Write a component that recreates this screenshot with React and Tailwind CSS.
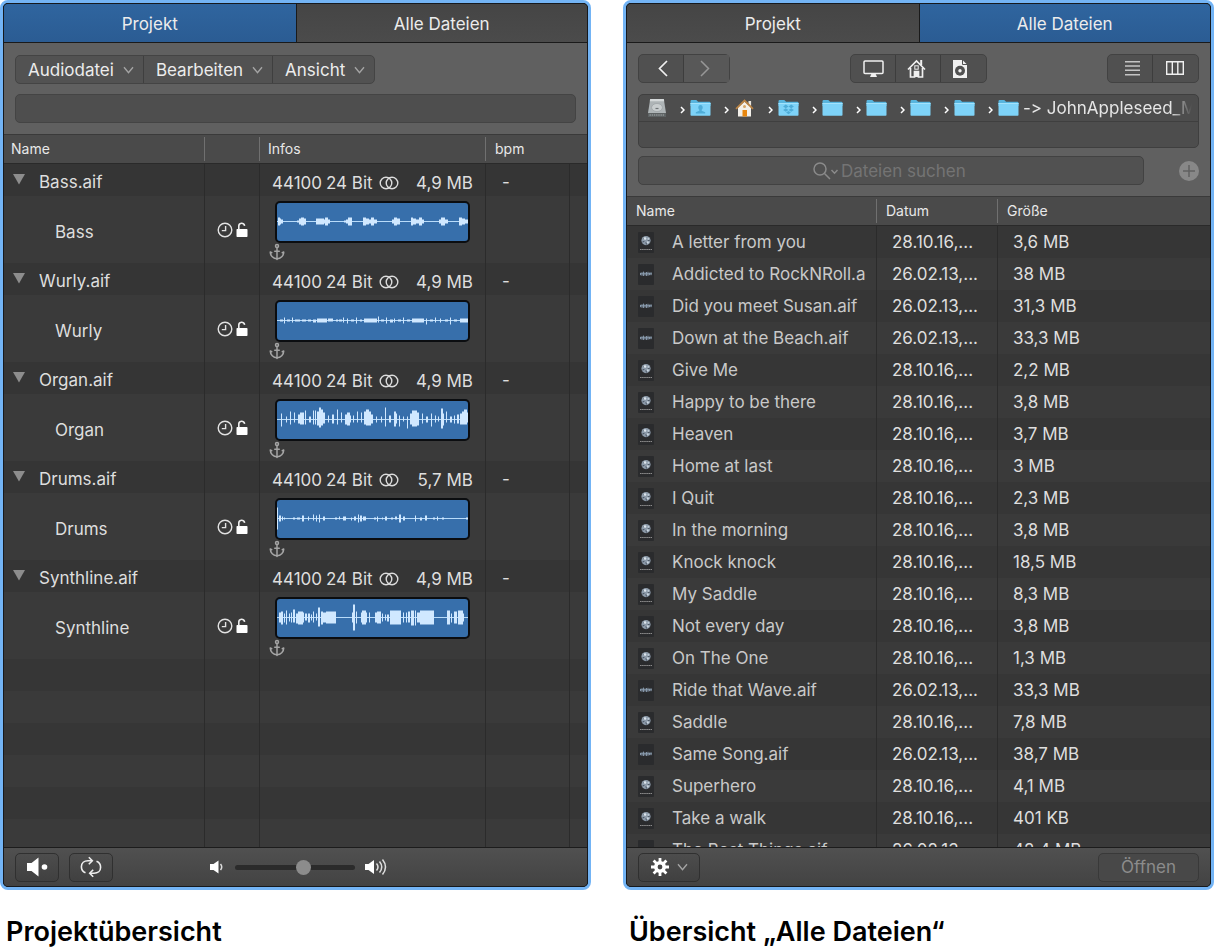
import React from "react";
import { Anchor } from "lucide-react";

const PROJECT = "PROJECT";
const AUDIO = "AUDIO";

// Each bar is [x, width, height above the axis, height below the axis]
const bassBars = [
  [1, 2, 4, 4], [3, 1, 3, 3], [4, 2, 2, 2],
  [20, 2, 1, 1], [22, 2, 3, 3], [24, 3, 4, 4], [27, 2, 3, 3],
  [39, 8, 3, 3], [47, 1, 2, 2], [48, 3, 4, 4], [51, 2, 2, 2],
  [67, 2, 1, 1], [69, 2, 2, 2], [71, 2, 4, 4], [73, 2, 4, 4],
  [86, 3, 4, 4], [89, 3, 3, 3], [92, 2, 2, 2], [94, 3, 4, 4], [97, 3, 2, 2],
  [115, 2, 2, 2], [117, 3, 4, 4], [120, 3, 3, 3],
  [134, 2, 4, 4], [136, 3, 3, 3], [139, 3, 2, 2], [142, 3, 4, 4], [145, 2, 2, 2],
  [162, 2, 2, 2], [164, 4, 4, 4], [168, 3, 2, 2],
  [182, 3, 4, 4], [185, 3, 3, 3], [188, 3, 2, 2],
];

const wurlyBars = [
  [3, 3, 1, 1], [7, 1, 3, 3], [10, 3, 1, 1], [15, 1, 3, 2], [18, 5, 1, 1], [25, 4, 1, 1],
  [31, 3, 1, 1], [36, 3, 1, 2], [40, 10, 2, 2], [51, 5, 2, 1], [59, 2, 1, 1], [62, 3, 1, 1],
  [66, 1, 3, 2], [70, 1, 2, 3], [74, 3, 1, 1], [79, 1, 3, 3], [83, 2, 1, 1], [87, 13, 2, 2],
  [101, 1, 4, 2], [104, 3, 1, 1], [109, 1, 3, 3], [113, 3, 1, 2], [117, 1, 2, 2],
  [121, 3, 1, 1], [126, 1, 3, 3], [130, 3, 1, 1], [135, 12, 2, 2], [149, 1, 2, 4],
  [153, 3, 1, 1], [158, 1, 3, 2], [163, 1, 2, 2], [168, 3, 1, 1], [173, 1, 3, 4],
  [177, 3, 1, 1], [183, 8, 2, 2],
];

const organBars = [
  [4, 1, 6, 7], [9, 1, 3, 3], [13, 1, 8, 5], [17, 1, 7, 3], [21, 2, 5, 4], [23, 4, 7, 5],
  [28, 1, 9, 5], [32, 2, 3, 3], [36, 1, 9, 5], [38, 1, 9, 5], [40, 2, 8, 6], [42, 2, 12, 8],
  [44, 2, 10, 6], [46, 2, 7, 4], [51, 1, 4, 3], [55, 2, 5, 4], [60, 1, 10, 5], [64, 1, 7, 3],
  [68, 2, 5, 5], [70, 3, 7, 6], [73, 1, 4, 3], [76, 1, 4, 3], [80, 1, 8, 3], [84, 1, 7, 3],
  [87, 2, 8, 5], [89, 3, 10, 6], [92, 2, 8, 6], [94, 2, 5, 4], [99, 1, 3, 3], [104, 1, 3, 3],
  [108, 1, 12, 7], [112, 2, 4, 3], [117, 2, 8, 7], [119, 1, 6, 4], [122, 1, 4, 7],
  [126, 1, 3, 2], [130, 1, 3, 9], [133, 2, 6, 5], [135, 5, 9, 7], [140, 2, 7, 6],
  [145, 1, 6, 4], [149, 2, 3, 3], [154, 1, 6, 7], [158, 1, 4, 3], [161, 1, 3, 2],
  [164, 2, 11, 9], [166, 1, 6, 6], [169, 1, 8, 3], [173, 2, 3, 3], [177, 1, 4, 4],
  [180, 2, 5, 4], [183, 2, 6, 5], [185, 2, 8, 5], [187, 3, 10, 5], [190, 1, 7, 3],
];

const drumsBars = [
  [0, 1, 11, 11], [2, 2, 3, 3], [5, 1, 2, 2], [7, 1, 1, 1], [16, 2, 1, 1], [20, 3, 1, 1],
  [25, 2, 3, 3], [31, 1, 2, 2], [36, 1, 4, 2], [39, 1, 3, 3], [42, 1, 4, 4], [46, 2, 2, 2],
  [58, 2, 1, 1], [62, 1, 2, 1], [66, 3, 2, 2], [74, 1, 1, 2], [77, 2, 2, 2], [81, 1, 4, 4],
  [83, 2, 3, 3], [86, 3, 2, 2], [97, 2, 1, 1], [100, 1, 2, 3], [105, 1, 1, 1], [108, 2, 2, 2],
  [114, 2, 1, 1], [118, 2, 2, 1], [122, 2, 4, 4], [126, 2, 2, 2], [138, 1, 3, 3],
  [143, 2, 1, 2], [148, 2, 3, 2], [156, 2, 1, 1], [160, 1, 2, 2], [165, 2, 1, 1], [189, 2, 1, 1],
];

const synthBars = [
  [2, 2, 5, 5], [4, 2, 6, 7], [7, 1, 4, 5], [9, 1, 7, 7], [12, 1, 4, 4], [14, 1, 5, 5],
  [16, 2, 8, 5], [19, 2, 4, 6], [21, 5, 6, 7], [26, 1, 5, 5], [28, 2, 4, 3], [31, 2, 4, 5],
  [34, 1, 3, 3], [36, 1, 6, 5], [39, 1, 4, 3], [41, 2, 10, 9], [44, 2, 6, 7], [46, 3, 5, 5],
  [49, 10, 6, 6],
  [75, 1, 5, 5], [76, 2, 13, 13], [79, 1, 6, 6], [84, 1, 5, 5], [85, 4, 7, 7], [89, 1, 5, 5],
  [92, 1, 5, 5],
  [98, 2, 5, 5], [100, 4, 6, 6], [105, 1, 4, 4], [108, 1, 3, 3], [110, 2, 3, 4],
  [113, 11, 7, 7], [126, 1, 5, 5], [129, 1, 5, 5], [131, 2, 6, 5], [134, 3, 7, 8],
  [138, 1, 7, 8], [140, 3, 5, 5], [143, 14, 7, 7],
  [170, 3, 7, 7], [174, 1, 4, 5], [177, 3, 6, 6], [181, 5, 7, 7], [186, 1, 4, 4],
];

const tracks = [
  { name: "Bass", size: "4,9 MB", bars: bassBars },
  { name: "Wurly", size: "4,9 MB", bars: wurlyBars },
  { name: "Organ", size: "4,9 MB", bars: organBars },
  { name: "Drums", size: "5,7 MB", bars: drumsBars },
  { name: "Synthline", size: "4,9 MB", bars: synthBars },
];

const files = [
  { name: "A letter from you", date: "28.10.16,...", size: "3,6 MB", kind: PROJECT },
  { name: "Addicted to RockNRoll.a", date: "26.02.13,...", size: "38 MB", kind: AUDIO },
  { name: "Did you meet Susan.aif", date: "26.02.13,...", size: "31,3 MB", kind: AUDIO },
  { name: "Down at the Beach.aif", date: "26.02.13,...", size: "33,3 MB", kind: AUDIO },
  { name: "Give Me", date: "28.10.16,...", size: "2,2 MB", kind: PROJECT },
  { name: "Happy to be there", date: "28.10.16,...", size: "3,8 MB", kind: PROJECT },
  { name: "Heaven", date: "28.10.16,...", size: "3,7 MB", kind: PROJECT },
  { name: "Home at last", date: "28.10.16,...", size: "3 MB", kind: PROJECT },
  { name: "I Quit", date: "28.10.16,...", size: "2,3 MB", kind: PROJECT },
  { name: "In the morning", date: "28.10.16,...", size: "3,8 MB", kind: PROJECT },
  { name: "Knock knock", date: "28.10.16,...", size: "18,5 MB", kind: PROJECT },
  { name: "My Saddle", date: "28.10.16,...", size: "8,3 MB", kind: PROJECT },
  { name: "Not every day", date: "28.10.16,...", size: "3,8 MB", kind: PROJECT },
  { name: "On The One", date: "28.10.16,...", size: "1,3 MB", kind: PROJECT },
  { name: "Ride that Wave.aif", date: "26.02.13,...", size: "33,3 MB", kind: AUDIO },
  { name: "Saddle", date: "28.10.16,...", size: "7,8 MB", kind: PROJECT },
  { name: "Same Song.aif", date: "26.02.13,...", size: "38,7 MB", kind: AUDIO },
  { name: "Superhero", date: "28.10.16,...", size: "4,1 MB", kind: PROJECT },
  { name: "Take a walk", date: "28.10.16,...", size: "401 KB", kind: PROJECT },
  { name: "The Best Things.aif", date: "26.02.13,...", size: "42,4 MB", kind: AUDIO },
];

const ChevronDown = () => (
  <svg className="w-[11px] h-2 text-[#a4a4a4]" viewBox="0 0 11 8" fill="none" stroke="currentColor" strokeWidth="1.4">
    <path d="M1 1.2 5.5 6.6 10 1.2" />
  </svg>
);

const Waveform = ({ bars }) => (
  <svg className="block w-[195px] h-[42px]" viewBox="0 0 195 42">
    <rect x="1" y="1" width="193" height="40" rx="4" fill="#376fab" stroke="#0b0d10" strokeWidth="2" />
    <rect x="2" y="20" width="191" height="1" fill="#b9dcfa" />
    {bars.map(([x, width, up, down]) => (
      <rect key={x} x={x + 2} y={20.5 - up} width={width} height={up + down} fill="#d0e8ff" />
    ))}
  </svg>
);

const ClockIcon = () => (
  <svg className="w-4 h-4" viewBox="0 0 16 16" fill="none" stroke="#e2e2e2" strokeWidth="1.4">
    <circle cx="8" cy="8" r="6.8" />
    <path d="M8.6 4v4.6H4.8" />
  </svg>
);

const UnlockIcon = () => (
  <svg className="w-3 h-4" viewBox="0 0 12 16">
    <rect x="0.5" y="7" width="11" height="8" rx="0.8" fill="#fff" />
    <path d="M2.8 7.5V4.4a2.9 2.9 0 0 1 5.8-.6" fill="none" stroke="#eee" strokeWidth="1.6" />
  </svg>
);

const StereoIcon = () => (
  <svg className="w-5 h-[14px]" viewBox="0 0 20 14" fill="none" stroke="#dcdcdc" strokeWidth="1.4">
    <circle cx="7" cy="7" r="5.8" />
    <circle cx="13" cy="7" r="5.8" />
  </svg>
);

const FileIcon = ({ kind }) => (
  <svg className="block w-4 h-[21px]" viewBox="0 0 16 21">
    <rect width="16" height="21" rx="1" fill="#2a2b2d" />
    {kind === PROJECT ? (
      <>
        <circle cx="8" cy="8.600" r="4.600" fill="#8e9cab" />
        <path d="M5.200 6.400l2 1.200M11.800 8.200l-2.200.8M8.400 12.600l-.4-2.400M4.400 10l2-.6" stroke="#3c4652" strokeWidth="0.9" />
        <circle cx="7" cy="6.600" r="1.300" fill="#dbe4ec" />
        <circle cx="9.800" cy="10.400" r="1.100" fill="#cdd8e2" />
        <circle cx="10.400" cy="6.800" r="0.900" fill="#c2ced9" />
        <path d="M2 17.500h12" stroke="#8c8c8c" strokeDasharray="1.6 0.5" />
      </>
    ) : (
      <path
        d="M2.500 8.800v2.400M4 8.200v3.600M5.500 7.600v4.400M7 8.400v3.200M8.500 8v4M10 7.800v4M11.500 8.600v2.600M13 8.200v3M2 9.800h12"
        stroke="#8da0b4"
        strokeWidth="0.9"
      />
    )}
  </svg>
);

const DriveIcon = () => (
  <svg className="w-5 h-5 shrink-0" viewBox="0 0 20 20">
    <path d="M3.2 1h13.6L19 15H1z" fill="#aeb4b6" />
    <path d="M3.2 1h13.6l.4 2.2H2.8z" fill="#d5d9da" />
    <path d="M1 15h18v4H1z" fill="#5d6263" />
    <ellipse cx="10" cy="9.5" rx="5.4" ry="4" fill="#c8cdce" stroke="#959b9d" strokeWidth="0.6" />
    <path d="M8.5 10.500h3" stroke="#6f7577" strokeWidth="1.2" />
    <path d="M2.5 17h15" stroke="#a9aeb0" strokeWidth="1" strokeDasharray="1.4 0.8" />
  </svg>
);

const FolderIcon = ({ badge }) => (
  <svg className="w-[21px] h-5 shrink-0" viewBox="0 0 21 20">
    <path d="M.5 3.2Q.5 2 1.7 2h4.6l1.8 1.8h11.2q1.2 0 1.2 1.2v3H.5z" fill="#58b5de" />
    <path d="M.5 5h20v12q0 .8-.8.8H1.3q-.8 0-.8-.8z" fill="#7ed3f8" />
    <path d="M.5 5h20v1H.5z" fill="#a3e2fc" />
    {badge === "user" && (
      <path
        d="M10.500 7c1.500 0 2.200 1 2.200 2.400 0 1.200-.6 1.800-1 2.300v1l3.500 1.500v1.300H5.800v-1.300l3.500-1.500v-1c-.4-.5-1-1.100-1-2.300C8.300 8 9 7 10.500 7z"
        fill="#4fadd8"
      />
    )}
    {badge === "dropbox" && (
      <path
        d="M7.8 6.6l2.7 1.8-2.7 1.8-2.7-1.8zM13.2 6.6l2.7 1.8-2.7 1.8-2.7-1.8zM7.8 10.2l2.7 1.8-2.7 1.8L5.1 12zM13.2 10.2l2.7 1.8-2.7 1.8-2.7-1.8zM10.5 13l2.4 1.6-2.4 1.6-2.4-1.6z"
        fill="#4fadd8"
      />
    )}
  </svg>
);

const HouseIcon = () => (
  <svg className="w-[21px] h-5 shrink-0" viewBox="0 0 21 20">
    <path d="M14.5 3h2.6v6h-2.6z" fill="#e9e4dc" />
    <path d="M4 9.5 10.5 3.5 17 9.5V18.5H4z" fill="#f3f0ea" />
    <path d="M2 10.8 10.5 2.6 19 10.8" fill="none" stroke="#b88244" strokeWidth="1.8" />
    <rect x="8.5" y="12" width="4.5" height="6.5" fill="#e8870f" />
    <circle cx="10.5" cy="8.5" r="1.5" fill="#d7a566" />
  </svg>
);

const crumbs = [
  { label: "Benutzer", icon: <FolderIcon badge="user" /> },
  { label: "Privat", icon: <HouseIcon /> },
  { label: "Dropbox", icon: <FolderIcon badge="dropbox" /> },
  { label: "Ordner 1", icon: <FolderIcon /> },
  { label: "Ordner 2", icon: <FolderIcon /> },
  { label: "Ordner 3", icon: <FolderIcon /> },
  { label: "Ordner 4", icon: <FolderIcon /> },
  { label: "Ordner 5", icon: <FolderIcon /> },
];

const Panel = ({ activeTab, caption, children }) => (
  <figure className="flex flex-col">
    <div className="flex-1 flex flex-col rounded-lg border-3 border-[#73b4f5] bg-black">
      <div className="flex-1 flex flex-col rounded-[5px] border border-[#16191d] overflow-hidden bg-[#3a3a3a] text-[17px] leading-6 text-[#dedede]">
        <div role="tablist" className="grid grid-cols-2 border-b border-[#1a1a1a] text-[#ececec]">
          {["Projekt", "Alle Dateien"].map((tab) => (
            <button
              key={tab}
              role="tab"
              aria-selected={tab === activeTab}
              className={`h-[38px] pt-[2px] border-[#1a1a1a] last:border-l ${
                tab === activeTab
                  ? "bg-linear-to-b from-[#2f659f] to-[#2b5c93]"
                  : "bg-linear-to-b from-[#454545] to-[#4b4b4b]"
              }`}
            >
              {tab}
            </button>
          ))}
        </div>
        {children}
      </div>
    </div>
    <figcaption className="mt-[27px] mb-[6px] pl-[6px] text-[27px] leading-[30px] font-semibold text-black">
      {caption}
    </figcaption>
  </figure>
);

const HeaderCell = ({ children, last, indent = "pl-[9px]" }) => (
  <th scope="col" className="h-[30px] p-0 border-y border-t-[#3a3a3a] border-b-[#2a2a2a] bg-[#4a4a4a] text-left text-sm font-normal text-[#e8e8e8]">
    <div className={`h-6 leading-6 ${indent} ${last ? "" : "border-r border-[#707070]"}`}>{children}</div>
  </th>
);

const ProjectPanel = () => (
  <Panel activeTab="Projekt" caption="Projektübersicht">
    <div className="bg-[#606060] px-[11px] pt-3 pb-[11px] flex flex-col gap-[10px]">
      <div className="flex self-start h-[29px] rounded-[5px] border border-[#444] bg-[#525252] divide-x divide-[#3f3f3f]">
        {["Audiodatei", "Bearbeiten", "Ansicht"].map((menu) => (
          <button key={menu} className="flex items-center gap-[9px] pl-3 pr-[9px] text-[#ececec]">
            {menu}
            <ChevronDown />
          </button>
        ))}
      </div>
      <input
        type="text"
        aria-label="Info"
        readOnly
        className="h-[29px] w-full rounded-[5px] border border-[#444] bg-[#4e4e4e] px-2"
      />
    </div>
    <table className="w-full table-fixed border-separate border-spacing-0">
      <colgroup>
        <col />
        <col className="w-[55px]" />
        <col className="w-[226px]" />
        <col className="w-[84px]" />
        <col className="w-[17px]" />
      </colgroup>
      <thead>
        <tr>
          <HeaderCell indent="pl-[7px]">Name</HeaderCell>
          <HeaderCell />
          <HeaderCell indent="pl-2">Infos</HeaderCell>
          <HeaderCell last>bpm</HeaderCell>
          <HeaderCell last />
        </tr>
      </thead>
      <tbody className="[&_td]:p-0 [&_td]:border-r [&_td]:border-[#2b2b2b] [&_td:last-child]:border-r-0">
        {tracks.map((track) => (
          <React.Fragment key={track.name}>
            <tr className="h-8 bg-[#353535]">
              <td>
                <div className="flex items-center gap-[14px] pl-[9px] pt-1">
                  <button aria-label={`${track.name}.aif zuklappen`} className="pb-[6px]">
                    <svg className="w-3 h-[11px]" viewBox="0 0 12 11" fill="#8d8d8d">
                      <path d="M0 0h12L6 10.5z" />
                    </svg>
                  </button>
                  {track.name}.aif
                </div>
              </td>
              <td />
              <td>
                <div className="flex items-center pl-3 pr-3 pt-[6px]">
                  <span className="w-[54px]">44100</span>
                  <span className="w-[53px]">24 Bit</span>
                  <StereoIcon />
                  <span className="ml-auto">{track.size}</span>
                </div>
              </td>
              <td>
                <div className="pl-4 pt-1">-</div>
              </td>
              <td />
            </tr>
            <tr className="h-[67px] bg-[#3a3a3a]">
              <td>
                <div className="pl-[51px] pt-1">{track.name}</div>
              </td>
              <td>
                <div className="flex items-center justify-center gap-[3px]">
                  <ClockIcon />
                  <UnlockIcon />
                </div>
              </td>
              <td className="align-top">
                <div className="pl-[15px] pt-[5px]">
                  <Waveform bars={track.bars} />
                </div>
                <Anchor className="ml-2 w-[18px] h-[18px] text-[#a5a5a5]" strokeWidth={2} />
              </td>
              <td />
              <td />
            </tr>
          </React.Fragment>
        ))}
        {[0, 1, 2, 3, 4, 5].map((row) => (
          <tr key={row} className="h-8 last:h-7 odd:bg-[#363636] even:bg-[#3a3a3a]">
            <td />
            <td />
            <td />
            <td />
            <td />
          </tr>
        ))}
      </tbody>
    </table>
    <div className="mt-auto h-[39px] grid grid-cols-[1fr_auto_1fr] items-center px-[11px] border-t border-[#1c1c1c] bg-linear-to-b from-[#505050] to-[#434343]">
      <div className="flex gap-[10px]">
        <button
          aria-label="Vorhören"
          className="w-11 h-[29px] flex items-center justify-center rounded-[5px] border border-[#303030] bg-linear-to-b from-[#4d4d4d] to-[#404040]"
        >
          <svg className="w-[22px] h-5" viewBox="0 0 22 20" fill="#fff">
            <path d="M1 6h4.500L12.500 0.500v19L5.500 14H1z" />
            <circle cx="18.500" cy="10" r="2.800" />
          </svg>
        </button>
        <button
          aria-label="Schleife"
          className="w-11 h-[29px] flex items-center justify-center rounded-[5px] border border-[#303030] bg-linear-to-b from-[#4d4d4d] to-[#404040]"
        >
          <svg className="w-[22px] h-[22px]" viewBox="0 0 22 22" fill="none" stroke="#eee" strokeWidth="1.6">
            <path d="M5.500 16.800C3 15.800 1.400 13.500 1.400 10.800 1.400 7 4.200 4.800 8 4.800H12" />
            <path d="M8.800 1.300 12.300 4.800 8.800 8.300" />
            <path d="M16.500 5.200C19 6.200 20.600 8.500 20.600 11.200 20.600 15 17.800 17.200 14 17.200H10" />
            <path d="M13.200 20.700 9.700 17.200 13.200 13.700" />
          </svg>
        </button>
      </div>
      <div className="flex items-center gap-[10px] pl-[6px]">
        <svg className="w-[15px] h-[14px]" viewBox="0 0 15 14" fill="#fff">
          <path d="M0 4h3.500L8.500 0.500v13L3.500 10H0z" />
          <path d="M10.500 4q2.500 3 0 6" fill="none" stroke="#ddd" strokeWidth="1.500" />
        </svg>
        <input
          type="range"
          aria-label="Lautstärke"
          min="0"
          max="100"
          defaultValue="58"
          className="w-[120px] h-4 appearance-none bg-transparent [&::-webkit-slider-runnable-track]:h-[5px] [&::-webkit-slider-runnable-track]:rounded-full [&::-webkit-slider-runnable-track]:bg-[#2b2b2b] [&::-webkit-slider-thumb]:appearance-none [&::-webkit-slider-thumb]:-mt-[5px] [&::-webkit-slider-thumb]:h-[15px] [&::-webkit-slider-thumb]:w-[15px] [&::-webkit-slider-thumb]:rounded-full [&::-webkit-slider-thumb]:bg-[#8c8c8c]"
        />
        <svg className="w-[22px] h-[18px]" viewBox="0 0 22 18" fill="#fff">
          <path d="M0 6h3.500L9 2v14L3.500 12H0z" />
          <path d="M11.500 5.500q3 3.500 0 7M14.500 3.500q4.500 5.500 0 11M17.500 1.500q6 7.500 0 15" fill="none" stroke="#ddd" strokeWidth="1.500" />
        </svg>
      </div>
    </div>
  </Panel>
);

const toolGroup = "flex h-[29px] rounded-[5px] border border-[#424242] bg-[#505050] divide-x divide-[#3d3d3d]";
const toolButton = "w-[45px] flex items-center justify-center text-[#f0f0f0]";

const FilesPanel = () => (
  <Panel activeTab="Alle Dateien" caption="Übersicht „Alle Dateien“">
    <div className="bg-[#606060] px-[11px] pt-[11px] pb-[11px]">
      <div className="flex justify-between">
        <div className={toolGroup}>
          <button aria-label="Zurück" className={toolButton}>
            <svg className="ml-[3px] w-[10px] h-[17px]" viewBox="0 0 10 17" fill="none" stroke="currentColor" strokeWidth="1.700">
              <path d="M9 1 1.500 8.500 9 16" />
            </svg>
          </button>
          <button aria-label="Vorwärts" disabled className="w-[45px] pr-1 flex items-center justify-center bg-[#585858] text-[#979797]">
            <svg className="w-[10px] h-[17px]" viewBox="0 0 10 17" fill="none" stroke="currentColor" strokeWidth="1.500">
              <path d="M1 1l7.500 7.500L1 16" />
            </svg>
          </button>
        </div>
        <div className={toolGroup}>
          <button aria-label="Computer" className={toolButton}>
            <svg className="mt-px w-[21px] h-[18px]" viewBox="0 0 21 18" fill="none" stroke="currentColor" strokeWidth="1.500">
              <rect x="1" y="1" width="19" height="12.500" rx="1" />
              <path d="M8.500 13.500h4l1.500 3.500H7z" fill="currentColor" stroke="none" />
            </svg>
          </button>
          <button aria-label="Privatordner" className={toolButton}>
            <svg className="mr-1 w-[19px] h-[19px]" viewBox="0 0 19 19" fill="none" stroke="currentColor">
              <path d="M1 10.500 9.500 2 18 10.500" strokeWidth="1.700" />
              <path d="M3.500 9v9h4v-5.500h4V18h4V9" strokeWidth="1.700" />
              <path d="M14.200 1v5" strokeWidth="2" />
              <rect x="7.800" y="6.800" width="3.400" height="3.400" strokeWidth="1" />
              <path d="M9.500 12.500V18" strokeWidth="3.500" />
            </svg>
          </button>
          <button aria-label="Projektordner" className={toolButton}>
            <svg className="mr-2 w-[14px] h-[18px]" viewBox="0 0 14 18">
              <path d="M0 0h9.500L14 4.500V18H0z" fill="currentColor" />
              <path d="M9.500 0v4.500H14" fill="none" stroke="#505050" strokeWidth="1" />
              <circle cx="7" cy="10.800" r="5" fill="#505050" />
              <circle cx="7" cy="10.800" r="1.700" fill="currentColor" />
            </svg>
          </button>
        </div>
        <div className={toolGroup}>
          <button aria-label="Listendarstellung" className={toolButton}>
            <svg className="ml-1 w-[15px] h-[15px]" viewBox="0 0 15 15" fill="#c4c4c4">
              <path d="M0 0h15v1.500H0zM0 4.300h15v1.500H0zM0 8.600h15v1.500H0zM0 12.900h15v1.500H0z" />
            </svg>
          </button>
          <button aria-label="Spaltendarstellung" className={toolButton}>
            <svg className="mr-[2px] mb-px w-[18px] h-[14px]" viewBox="0 0 18 14" fill="none" stroke="currentColor" strokeWidth="1.400">
              <path d="M.7.7h16.600v12.600H.7zM6.300 1v12M11.800 1v12" />
            </svg>
          </button>
        </div>
      </div>
      <div className="mt-[11px] rounded-[5px] border border-[#3f3f3f] bg-[#4d4d4d]">
        <div className="h-[27px] border-b border-[#3f3f3f]">
          <nav
            aria-label="Pfad"
            className="flex items-center h-[26px] pl-2 mr-[6px] overflow-hidden whitespace-nowrap [mask-image:linear-gradient(to_right,black_96%,transparent)]"
          >
            <a href="#drive" aria-label="Macintosh HD">
              <DriveIcon />
            </a>
            {crumbs.map((crumb) => (
              <React.Fragment key={crumb.label}>
                <svg className="ml-[13px] mr-[5px] mt-1 w-[5px] h-2 shrink-0" viewBox="0 0 5 8" fill="none" stroke="#fff" strokeWidth="1.500">
                  <path d="M1 1l3 3-3 3" />
                </svg>
                <a href={`#${crumb.label}`} aria-label={crumb.label}>
                  {crumb.icon}
                </a>
              </React.Fragment>
            ))}
            <span className="pl-1 text-[#e6e6e6] [font-feature-settings:'calt'_0]">-&gt; JohnAppleseed_M</span>
          </nav>
        </div>
        <div className="h-[25px]" />
      </div>
      <div className="mt-2 flex items-center justify-between">
        <label className="w-[506px] h-[29px] flex items-center justify-center rounded-[5px] border border-[#424242] bg-[#515151] text-[#777]">
          <svg className="w-[26px] h-[18px]" viewBox="0 0 26 18" fill="none" stroke="#8a8a8a" strokeWidth="1.500">
            <circle cx="7" cy="7" r="6" />
            <path d="M11.500 11.500l5.500 5.500M18.500 8l3 3.200L24.500 8" />
          </svg>
          <input
            type="text"
            aria-label="Dateien suchen"
            placeholder="Dateien suchen"
            className="w-[130px] pl-[2px] bg-transparent outline-none placeholder:text-[#747474]"
          />
        </label>
        <button aria-label="Suchkriterium hinzufügen">
          <svg className="block w-5 h-5" viewBox="0 0 20 20">
            <circle cx="10" cy="10" r="10" fill="#888" />
            <path d="M10 4v12M4 10h12" stroke="#606060" strokeWidth="1.500" />
          </svg>
        </button>
      </div>
    </div>
    <div className="h-[651px] overflow-y-auto [scrollbar-width:none]">
      <table className="w-full table-fixed border-separate border-spacing-0">
        <colgroup>
          <col />
          <col className="w-[121px]" />
          <col className="w-[212px]" />
        </colgroup>
        <thead className="sticky top-0">
          <tr>
            <HeaderCell>Name</HeaderCell>
            <HeaderCell>Datum</HeaderCell>
            <HeaderCell last>Größe</HeaderCell>
          </tr>
        </thead>
        <tbody>
          {files.map((file) => (
            <tr key={file.name} className="h-8 odd:bg-[#363636] even:bg-[#3a3a3a]">
              <td className="p-0 border-r border-[#2b2b2b]">
                <div className="flex items-center pl-[11px] pr-[9px] text-[#c9c9c9]">
                  <FileIcon kind={file.kind} />
                  <span className="flex-1 ml-[18px] overflow-hidden whitespace-nowrap">{file.name}</span>
                </div>
              </td>
              <td className="p-0 pl-[15px] border-r border-[#2b2b2b] whitespace-nowrap">{file.date}</td>
              <td className="p-0 pl-[15px]">{file.size}</td>
            </tr>
          ))}
        </tbody>
      </table>
    </div>
    <div className="mt-auto h-[39px] flex items-center justify-between px-[11px] border-t border-[#1c1c1c] bg-linear-to-b from-[#505050] to-[#434343]">
      <button
        aria-label="Aktionen"
        className="w-[62px] h-[29px] flex items-center justify-center gap-2 rounded-[5px] border border-[#303030] bg-linear-to-b from-[#4d4d4d] to-[#404040]"
      >
        <svg className="w-[18px] h-[18px]" viewBox="0 0 18 18" fill="none" stroke="#fff">
          <path d="M9 0v18M0 9h18M2.600 2.600l12.800 12.800M15.400 2.600L2.600 15.400" strokeWidth="2.800" />
          <circle cx="9" cy="9" r="4.200" strokeWidth="3.600" fill="#464646" />
        </svg>
        <ChevronDown />
      </button>
      <button disabled className="w-[101px] h-[29px] rounded-[5px] border border-[#393939] bg-[#484848] text-[#8c8c8c]">
        Öffnen
      </button>
    </div>
  </Panel>
);

const App = () => {
  return (
    <main className="grid grid-cols-2 gap-8 pr-[2px] bg-white font-['Inter',sans-serif]">
      <ProjectPanel />
      <FilesPanel />
    </main>
  );
};

export default App;
